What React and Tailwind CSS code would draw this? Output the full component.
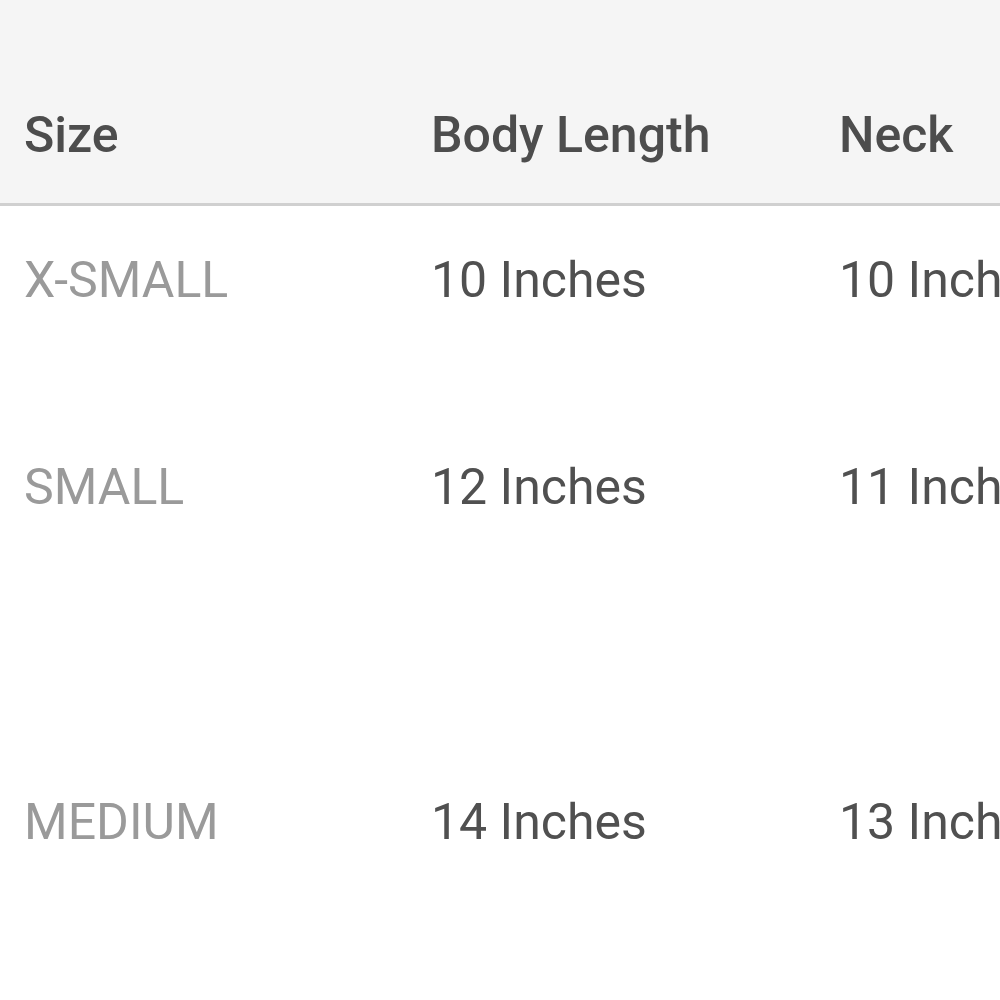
import React from "react";

const rows = [
  { size: "X-SMALL", body: "10 Inches", neck: "10 Inches", h: "h-[207px]" },
  { size: "SMALL", body: "12 Inches", neck: "11 Inches", h: "h-[335px]" },
  { size: "MEDIUM", body: "14 Inches", neck: "13 Inches", h: "h-[250px]" },
];

export default function App() {
  return (
    <div
      className="w-[1000px] h-[1000px] overflow-hidden bg-white"
      style={{ fontFamily: "Roboto, 'Noto Sans', sans-serif" }}
    >
      <div className="w-[1400px]">
        {/* header */}
        <div className="flex h-[206px] bg-[#f5f5f5] border-b-[3px] border-[#d0d0d0] pt-[110px] text-[50px] leading-none font-medium text-[#4d4d4d]">
          <div className="w-[408px] pl-[24px]">Size</div>
          <div className="w-[408px] pl-[23px]">Body Length</div>
          <div className="w-[408px] pl-[23px]">Neck</div>
        </div>

        {/* body rows */}
        {rows.map((r) => (
          <div key={r.size} className={`flex ${r.h} pt-[49px] text-[50px] leading-none`}>
            <div className="w-[408px] pl-[24px] text-[#9a9a9a]">{r.size}</div>
            <div className="w-[408px] pl-[23px] text-[#505050]">{r.body}</div>
            <div className="w-[408px] pl-[23px] text-[#505050]">{r.neck}</div>
          </div>
        ))}
      </div>
    </div>
  );
}
